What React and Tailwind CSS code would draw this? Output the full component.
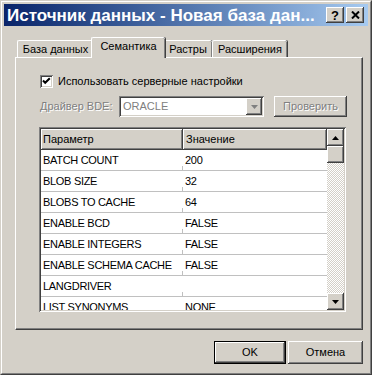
const raised =
  "bg-[#d4d0c8] shadow-[inset_-1px_-1px_#404040,inset_1px_1px_#ffffff,inset_-2px_-2px_#808080,inset_2px_2px_#d4d0c8]";
const sunken =
  "shadow-[inset_1px_1px_#808080,inset_-1px_-1px_#ffffff,inset_2px_2px_#404040,inset_-2px_-2px_#d4d0c8]";
const disabledText = "text-[#808080] [text-shadow:1px_1px_0_#ffffff]";

const rows = [
  ["BATCH COUNT", "200"],
  ["BLOB SIZE", "32"],
  ["BLOBS TO CACHE", "64"],
  ["ENABLE BCD", "FALSE"],
  ["ENABLE INTEGERS", "FALSE"],
  ["ENABLE SCHEMA CACHE", "FALSE"],
  ["LANGDRIVER", ""],
  ["LIST SYNONYMS", "NONE"],
];

const Arrow = ({ up, color = "#000000" }) => (
  <svg width="7" height="4" viewBox="0 0 7 4">
    {up ? (
      <path d="M3.5 0 L7 4 L0 4 Z" fill={color} />
    ) : (
      <path d="M0 0 L7 0 L3.5 4 Z" fill={color} />
    )}
  </svg>
);

const Tab = ({ label, width, active }) =>
  active ? (
    <div
      className={`relative z-10 -mx-[2px] -mb-px h-[21px] ${width} flex items-start justify-center pt-[3px] bg-[#d4d0c8] border-t border-l border-white rounded-t-[2px] shadow-[inset_-1px_0_#808080,1px_0_#404040]`}
    >
      {label}
    </div>
  ) : (
    <div
      className={`h-[17px] ${width} flex items-center justify-center pt-px bg-[#d4d0c8] border-t border-l border-white rounded-t-[2px] shadow-[inset_-1px_0_#808080,1px_0_#404040]`}
    >
      {label}
    </div>
  );

const App = () => {
  return (
    <div className="w-[372px] h-[375px] bg-[#d4d0c8] font-['Liberation_Sans',Arial,sans-serif] text-[11px] leading-none text-black">
      {/* рамка окна */}
      <div className="h-full w-full border border-t-[#d4d0c8] border-l-[#d4d0c8] border-r-[#404040] border-b-[#404040]">
        <div className="h-full w-full border border-t-white border-l-white border-r-[#808080] border-b-[#808080] p-[2px] flex flex-col">
          {/* заголовок */}
          <div className="h-[22px] flex items-center bg-linear-to-r from-[#0a246a] to-[#a6caf0] pl-[3px] pr-[4px]">
            <span className="flex-1 text-white font-bold text-[17px] whitespace-nowrap overflow-hidden">
              Источник данных - Новая база дан...
            </span>
            <div className="flex gap-[2px]">
              <div className={`w-[18px] h-[16px] flex items-center justify-center font-bold text-[13px] ${raised}`}>
                ?
              </div>
              <div className={`w-[18px] h-[16px] flex items-center justify-center ${raised}`}>
                <svg width="9" height="8" viewBox="0 0 9 8">
                  <path d="M1 0.5 L8 7.5 M8 0.5 L1 7.5" stroke="#000" strokeWidth="2" />
                </svg>
              </div>
            </div>
          </div>

          {/* вкладки */}
          <div className="mt-[11px] ml-[11px] w-[348px]">
            <div className="flex items-end h-[20px] pl-[2px]">
              <Tab label="База данных" width="w-[76px]" />
              <Tab label="Семантика" width="w-[74px]" active />
              <Tab label="Растры" width="w-[49px]" />
              <Tab label="Расширения" width="w-[75px]" />
            </div>

            {/* панель */}
            <div className="h-[273px] border-t border-l border-white border-r border-b border-r-[#404040] border-b-[#404040] shadow-[inset_-1px_-1px_#808080] pl-[24px] pt-[17px]">
              <div className="flex items-center gap-[5px] h-[13px]">
                <div className={`w-[13px] h-[13px] bg-white ${sunken} flex items-center justify-center`}>
                  <svg width="13" height="13" viewBox="0 0 13 13">
                    <path d="M3 5.5 L5.2 7.8 L9.8 3.2" stroke="#000" strokeWidth="2" fill="none" />
                  </svg>
                </div>
                <span>Использовать серверные настройки</span>
              </div>

              <div className="mt-[8px] flex items-center h-[21px]">
                <span className={`w-[79px] ${disabledText}`}>Драйвер BDE:</span>
                <div className={`w-[145px] h-[21px] bg-white ${sunken} p-[2px] flex items-center`}>
                  <span className="flex-1 pl-[2px] text-[#808080]">ORACLE</span>
                  <div className={`w-[16px] h-[17px] flex items-center justify-center ${raised}`}>
                    <Arrow color="#808080" />
                  </div>
                </div>
                <div className={`ml-[10px] w-[73px] h-[21px] flex items-center justify-center ${raised} ${disabledText}`}>
                  Проверить
                </div>
              </div>

              {/* сетка параметров */}
              <div className={`mt-[10px] -ml-px w-[307px] h-[185px] bg-white ${sunken} p-[2px] flex`}>
                <div className="flex-1 flex flex-col overflow-hidden">
                  <div className="flex h-[21px] shrink-0">
                    <div className={`w-[142px] flex items-center pl-[2px] ${raised}`}>Параметр</div>
                    <div className={`flex-1 flex items-center pl-[3px] ${raised}`}>Значение</div>
                  </div>
                  {rows.map(([name, value]) => (
                    <div
                      key={name}
                      className="relative flex h-[21px] shrink-0 border-b border-[#c0c0c0] tracking-[-0.3px]"
                    >
                      <div className="w-[142px] flex items-center pl-[2px] pt-px">{name}</div>
                      <div className="absolute left-[141px] bottom-0 w-px h-[4px] bg-[#c0c0c0]" />
                      <div className="flex-1 flex items-center pl-[2px] pt-px">{value}</div>
                    </div>
                  ))}
                </div>
                <div className="w-[17px] flex flex-col">
                  <div className={`h-[17px] flex items-center justify-center ${raised}`}>
                    <Arrow up />
                  </div>
                  <div className={`h-[17px] ${raised}`} />
                  <div className="flex-1 bg-[image:repeating-conic-gradient(#d4d0c8_0%_25%,#ffffff_0%_50%)] bg-[length:2px_2px]" />
                  <div className={`h-[17px] flex items-center justify-center ${raised}`}>
                    <Arrow />
                  </div>
                </div>
              </div>
            </div>

            {/* кнопки */}
            <div className="mt-[11px] flex justify-end gap-[2px]">
              <div className="w-[72px] h-[23px] border border-black">
                <div className={`h-full w-full flex items-center justify-center ${raised}`}>OK</div>
              </div>
              <div className={`w-[75px] h-[23px] flex items-center justify-center ${raised}`}>Отмена</div>
            </div>
          </div>
        </div>
      </div>
    </div>
  );
};

export default App;
